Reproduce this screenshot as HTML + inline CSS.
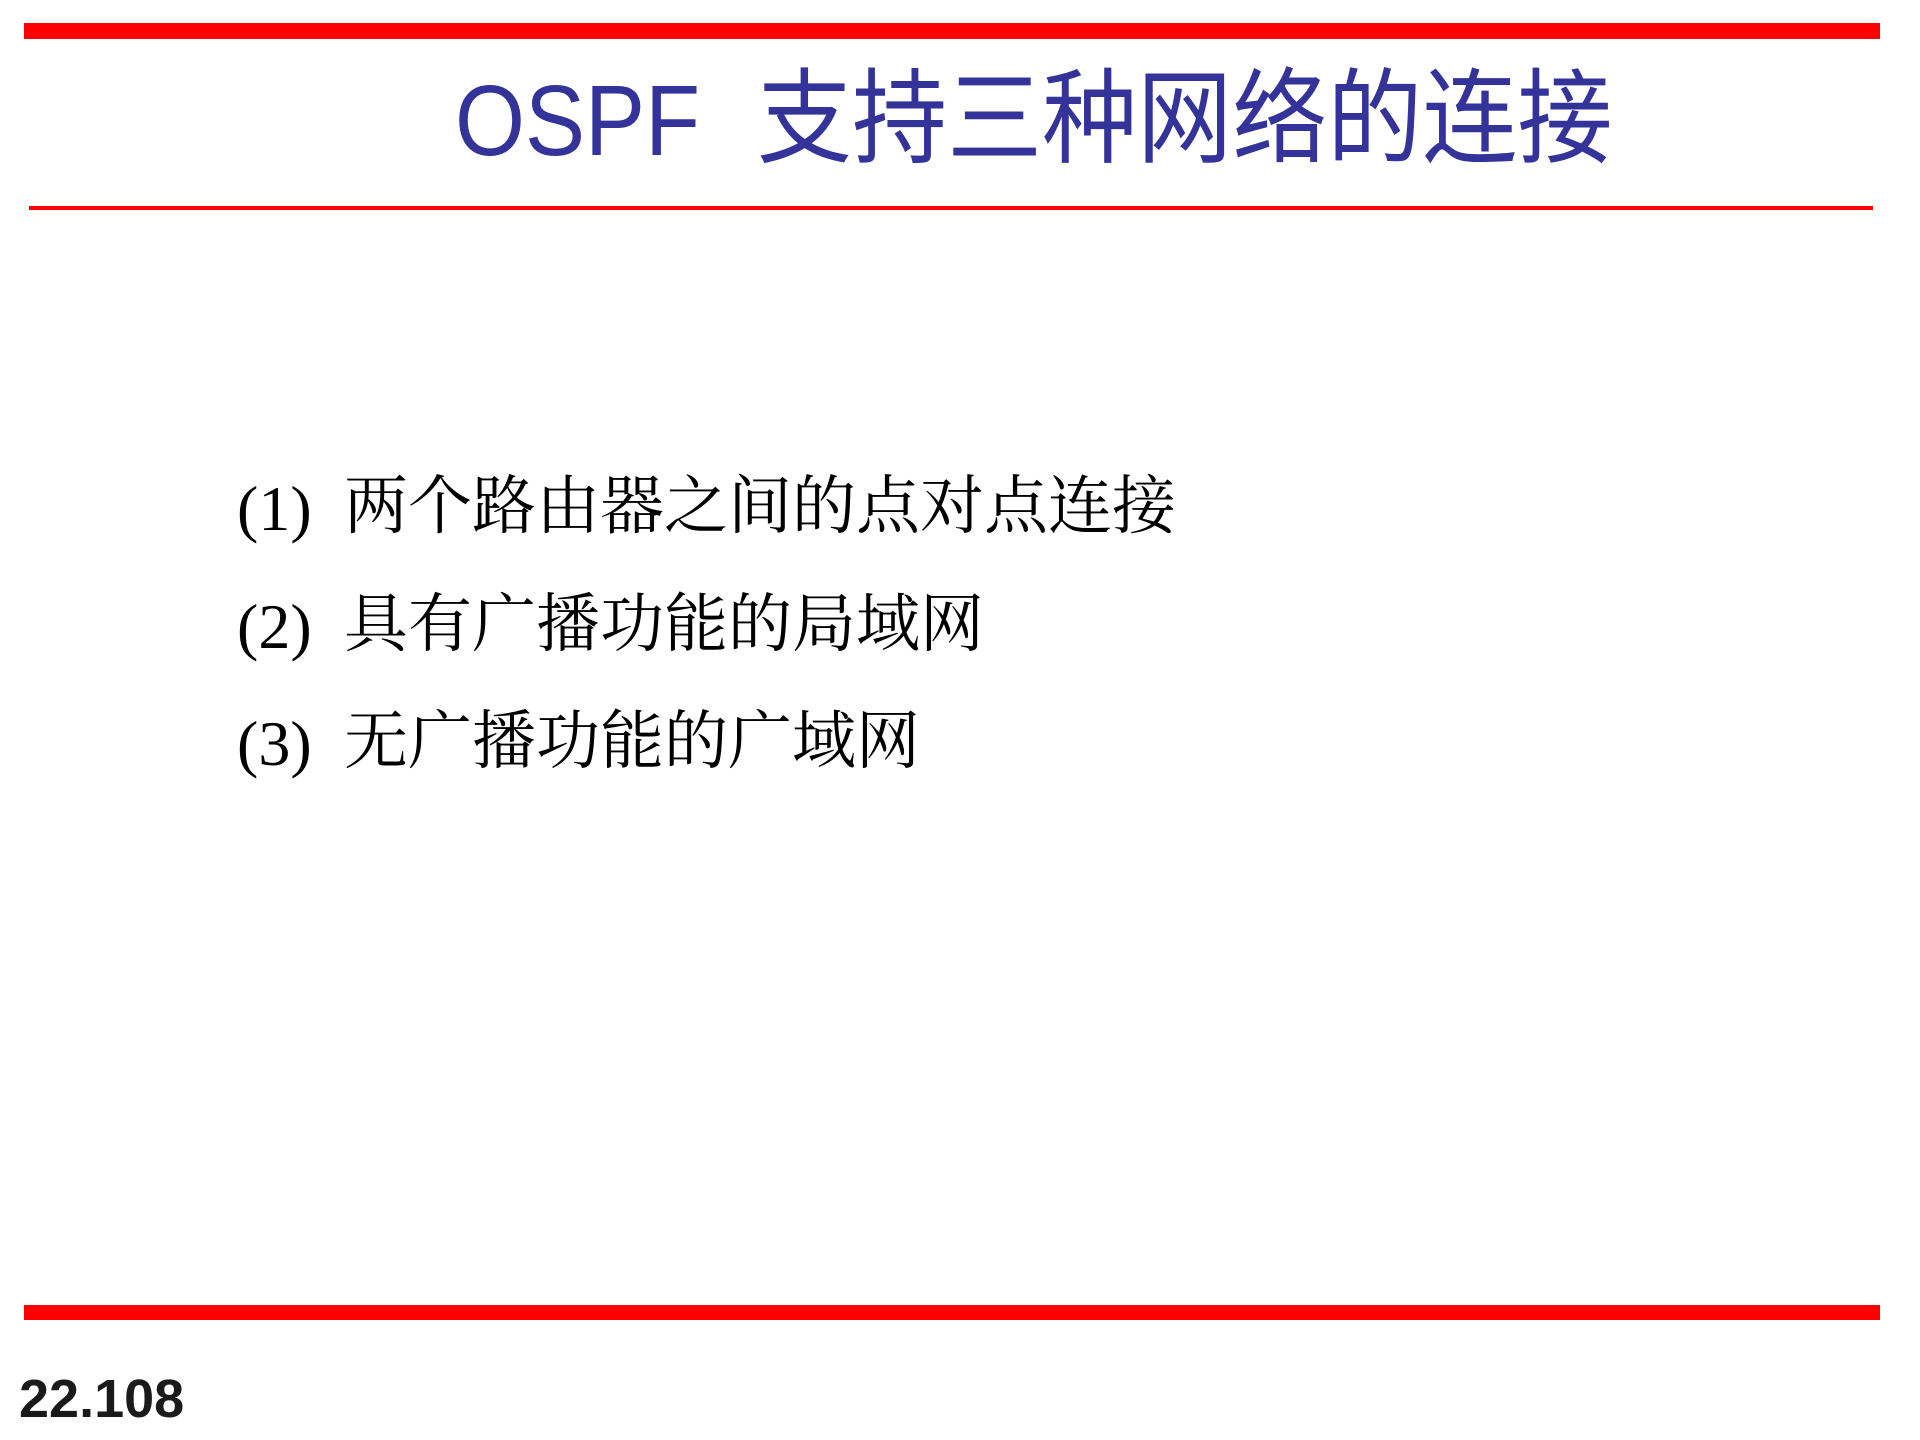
<!DOCTYPE html>
<html><head><meta charset="utf-8"><style>
body{margin:0;width:1920px;height:1440px;background:#fff;position:relative;overflow:hidden}
.a{position:absolute}
.bar{background:#f00}
.t{font-family:"Liberation Sans","Noto Sans CJK SC",sans-serif;color:#333399;white-space:nowrap;line-height:1}
.b{font-family:"Liberation Serif","Noto Serif CJK SC",serif;color:#000;font-size:64px;line-height:64px;white-space:nowrap}
</style></head><body>
<div class="a bar" style="left:24px;top:23px;width:1856px;height:16px"></div>
<div class="a bar" style="left:29px;top:206px;width:1844px;height:4px"></div>
<div class="a t" style="left:455px;top:71px;font-size:100px;transform:scaleX(0.9);transform-origin:top left">OSPF</div>
<div class="a t" style="left:757px;top:68px;font-size:96px;transform:scale(0.99,1.08);transform-origin:top left">支持三种网络的连接</div>
<div class="a b" style="left:237px;top:477px">(1)</div>
<div class="a b" style="left:344px;top:475px">两个路由器之间的点对点连接</div>
<div class="a b" style="left:237px;top:595px">(2)</div>
<div class="a b" style="left:344px;top:593px">具有广播功能的局域网</div>
<div class="a b" style="left:237px;top:712px">(3)</div>
<div class="a b" style="left:344px;top:710px">无广播功能的广域网</div>
<div class="a bar" style="left:24px;top:1305px;width:1856px;height:15px"></div>
<div class="a" style="left:19px;top:1372px;font-family:'Liberation Sans',sans-serif;font-weight:bold;font-size:54px;line-height:1;color:#1a1a1a">22.108</div>
</body></html>
